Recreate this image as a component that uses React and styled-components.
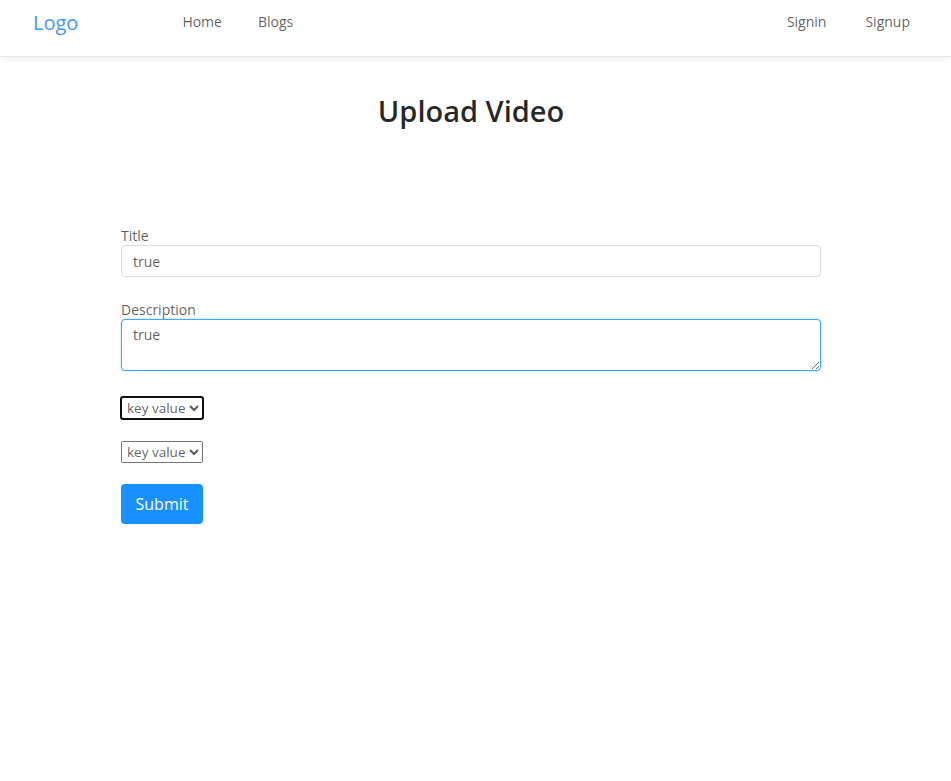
import React from "react";
import styled, { createGlobalStyle } from "styled-components";

const Global = createGlobalStyle`
  html, body { margin: 0; padding: 0; background: #fff; }
  body { font-family: "Open Sans", "Noto Sans", Arial, sans-serif; color: rgba(0,0,0,0.65); }
  * { box-sizing: border-box; }
`;

const Header = styled.header`
  height: 57px;
  display: flex;
  align-items: flex-start;
  border-bottom: 1px solid #e8e8e8;
  box-shadow: 0 2px 8px #f0f1f2;
  background: #fff;
  padding: 0 41px 0 33px;
`;

const Logo = styled.a`
  font-size: 20px;
  color: #3f96ff;
  line-height: 46px;
  text-decoration: none;
  margin-right: 104px;
`;

const Nav = styled.nav`
  display: flex;
  gap: ${p => (p.$right ? "39px" : "36px")};
  margin-left: ${p => (p.$right ? "auto" : "0")};
`;

const NavLink = styled.a`
  font-size: 14px;
  color: rgba(0,0,0,0.65);
  line-height: 43px;
  text-decoration: none;
`;

const Main = styled.main`
  display: flex;
  flex-direction: column;
  align-items: center;
  padding: 33px 9px 0 0;
`;

const Title = styled.h1`
  margin: 0;
  font-size: 29px;
  font-weight: 600;
  color: rgba(0,0,0,0.85);
  line-height: 42px;
`;

const Form = styled.form`
  width: 700px;
  margin-top: 94px;
  display: flex;
  flex-direction: column;
  align-items: flex-start;
`;

const Field = styled.div`
  width: 100%;
  display: flex;
  flex-direction: column;
  margin-bottom: ${p => p.$mb || "22px"};
`;

const Label = styled.label`
  font-size: 14px;
  line-height: 20px;
  color: rgba(0,0,0,0.65);
  margin-bottom: -1px;
`;

const Input = styled.input`
  width: 100%;
  height: 32px;
  border: 1px solid #d9d9d9;
  border-radius: 4px;
  padding: 4px 11px;
  font-family: inherit;
  font-size: 14px;
  color: rgba(0,0,0,0.65);
  outline: none;
`;

const TextArea = styled.textarea`
  width: 100%;
  height: 52px;
  border: 1px solid #40a9ff;
  border-radius: 4px;
  padding: 4px 11px;
  font-family: inherit;
  font-size: 14px;
  line-height: 22px;
  color: rgba(0,0,0,0.65);
  outline: none;
  box-shadow: 0 0 0 1px rgba(24,144,255,0.15);
`;

const Select = styled.select`
  width: 82px;
  height: 22px;
  font-family: inherit;
  font-size: 13.5px;
  color: rgba(0,0,0,0.65);
  border: 1px solid #767676;
  border-radius: 2px;
  background: #fff;
  padding: 0 1px;
  margin-bottom: ${p => p.$mb || "22px"};
  outline: ${p => (p.$focused ? "2px solid #101010" : "none")};
  outline-offset: -1px;
`;

const Submit = styled.button`
  width: 82px;
  height: 40px;
  background: #1890ff;
  color: #fff;
  border: none;
  border-radius: 4px;
  font-family: inherit;
  font-size: 16px;
  cursor: pointer;
`;

export default function App() {
  return (
    <>
      <Global />
      <Header>
        <Logo href="#">Logo</Logo>
        <Nav>
          <NavLink href="#">Home</NavLink>
          <NavLink href="#">Blogs</NavLink>
        </Nav>
        <Nav $right>
          <NavLink href="#">Signin</NavLink>
          <NavLink href="#">Signup</NavLink>
        </Nav>
      </Header>
      <Main>
        <Title>Upload Video</Title>
        <Form onSubmit={e => e.preventDefault()}>
          <Field $mb="23px">
            <Label>Title</Label>
            <Input defaultValue="true" />
          </Field>
          <Field $mb="26px">
            <Label>Description</Label>
            <TextArea defaultValue="true" />
          </Field>
          <Select $focused defaultValue="k">
            <option value="k">key value</option>
          </Select>
          <Select $mb="21px" defaultValue="k">
            <option value="k">key value</option>
          </Select>
          <Submit type="submit">Submit</Submit>
        </Form>
      </Main>
    </>
  );
}
